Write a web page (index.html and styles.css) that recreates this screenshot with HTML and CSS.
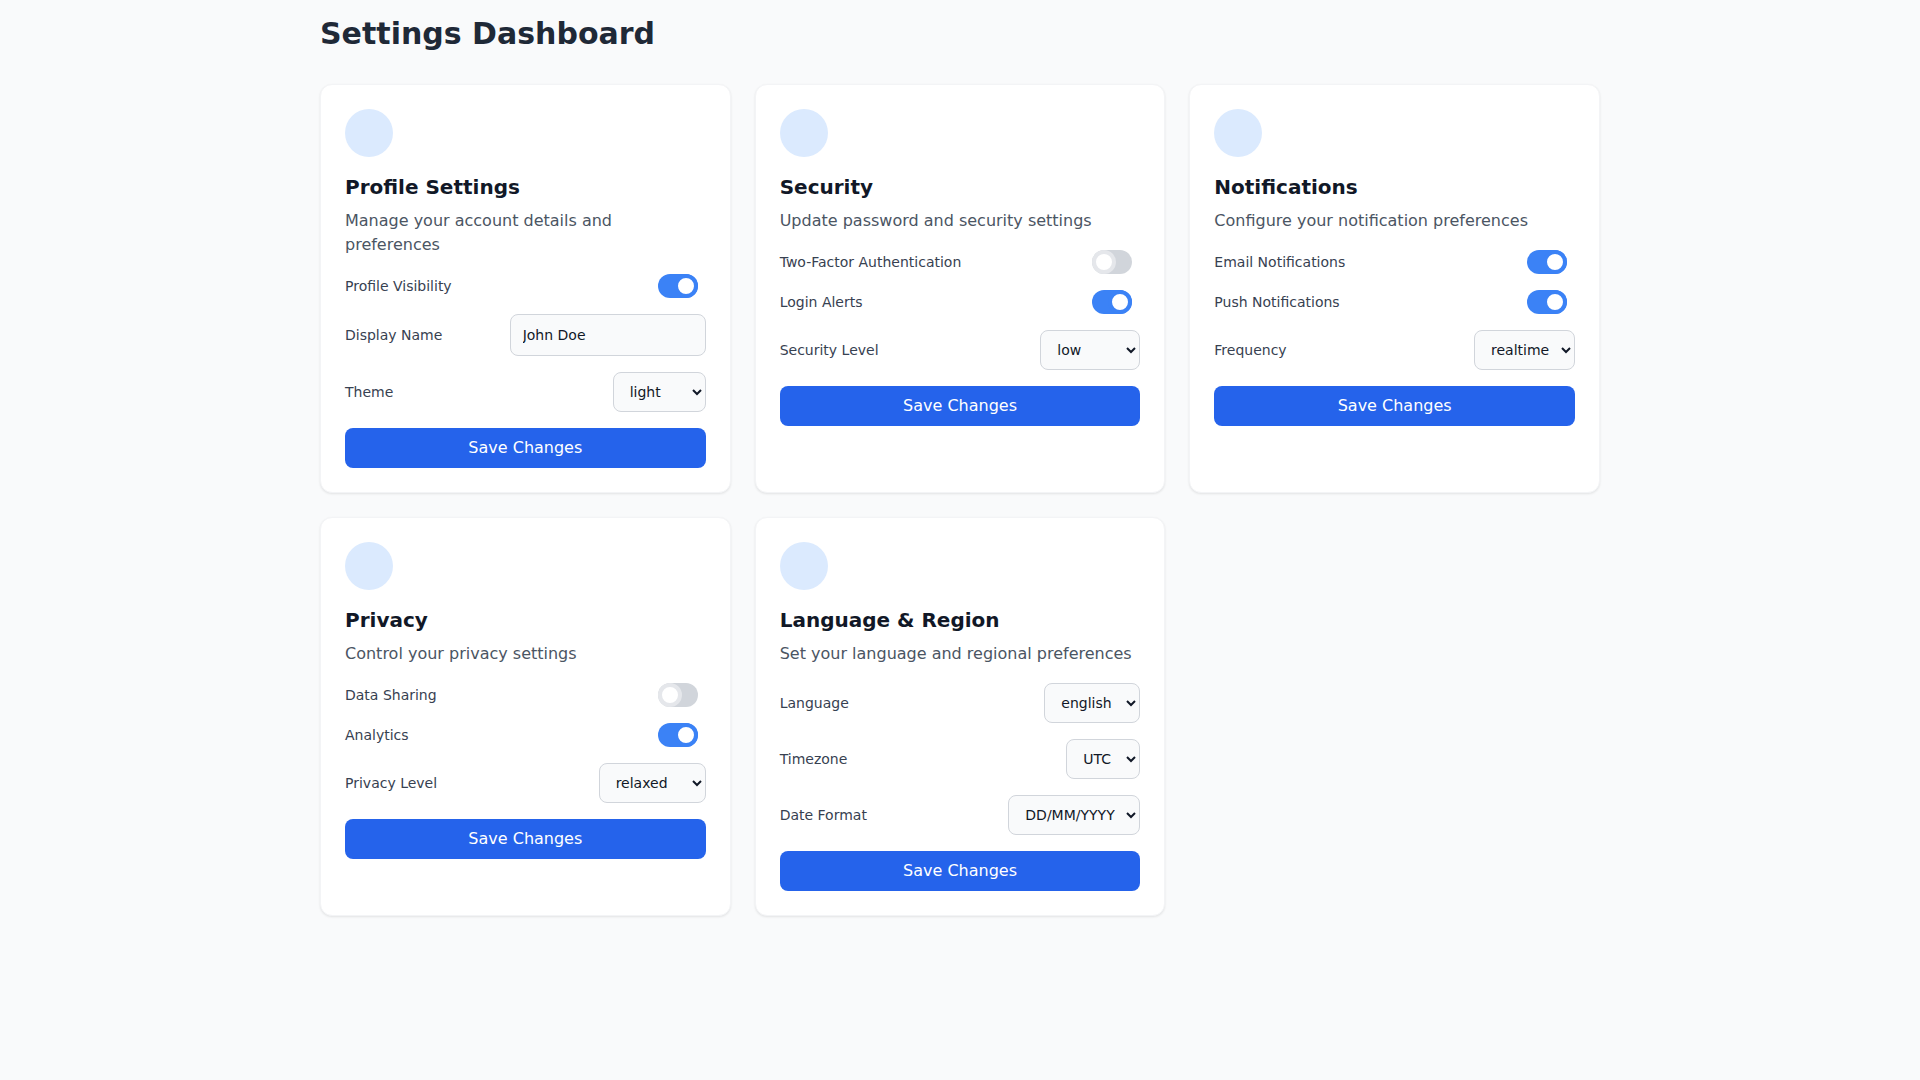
FILE: index.html
```html
<!DOCTYPE html>
<html lang="en">
<head>
<meta charset="utf-8">
<title>Settings Dashboard</title>
<link rel="stylesheet" href="styles.css">
</head>
<body>
<div class="page">
  <div class="container">
    <h1 class="page-title">Settings Dashboard</h1>
    <div class="grid">
      <div class="card">
        <div class="card-icon"></div>
        <h2 class="card-title">Profile Settings</h2>
        <p class="card-desc">Manage your account details and preferences</p>
        <div class="fields">
          <div class="row">
            <span class="label">Profile Visibility</span>
            <div class="toggle"><input type="checkbox" class="toggle-input" checked><span class="toggle-track"></span></div>
          </div>
          <div class="row">
            <span class="label">Display Name</span>
            <input type="text" class="text-input" value="John Doe">
          </div>
          <div class="row">
            <span class="label">Theme</span>
            <select class="select"><option>light</option><option>dark</option><option>system</option></select>
          </div>
          <button class="btn">Save Changes</button>
        </div>
      </div>

      <div class="card">
        <div class="card-icon"></div>
        <h2 class="card-title">Security</h2>
        <p class="card-desc">Update password and security settings</p>
        <div class="fields">
          <div class="row">
            <span class="label">Two-Factor Authentication</span>
            <div class="toggle"><input type="checkbox" class="toggle-input"><span class="toggle-track"></span></div>
          </div>
          <div class="row">
            <span class="label">Login Alerts</span>
            <div class="toggle"><input type="checkbox" class="toggle-input" checked><span class="toggle-track"></span></div>
          </div>
          <div class="row">
            <span class="label">Security Level</span>
            <select class="select"><option>low</option><option>medium</option><option>high</option></select>
          </div>
          <button class="btn">Save Changes</button>
        </div>
      </div>

      <div class="card">
        <div class="card-icon"></div>
        <h2 class="card-title">Notifications</h2>
        <p class="card-desc">Configure your notification preferences</p>
        <div class="fields">
          <div class="row">
            <span class="label">Email Notifications</span>
            <div class="toggle"><input type="checkbox" class="toggle-input" checked><span class="toggle-track"></span></div>
          </div>
          <div class="row">
            <span class="label">Push Notifications</span>
            <div class="toggle"><input type="checkbox" class="toggle-input" checked><span class="toggle-track"></span></div>
          </div>
          <div class="row">
            <span class="label">Frequency</span>
            <select class="select"><option>realtime</option><option>daily</option><option>weekly</option></select>
          </div>
          <button class="btn">Save Changes</button>
        </div>
      </div>

      <div class="card">
        <div class="card-icon"></div>
        <h2 class="card-title">Privacy</h2>
        <p class="card-desc">Control your privacy settings</p>
        <div class="fields">
          <div class="row">
            <span class="label">Data Sharing</span>
            <div class="toggle"><input type="checkbox" class="toggle-input"><span class="toggle-track"></span></div>
          </div>
          <div class="row">
            <span class="label">Analytics</span>
            <div class="toggle"><input type="checkbox" class="toggle-input" checked><span class="toggle-track"></span></div>
          </div>
          <div class="row">
            <span class="label">Privacy Level</span>
            <select class="select"><option>relaxed</option><option>balanced</option><option>strict</option></select>
          </div>
          <button class="btn">Save Changes</button>
        </div>
      </div>

      <div class="card">
        <div class="card-icon"></div>
        <h2 class="card-title">Language &amp; Region</h2>
        <p class="card-desc">Set your language and regional preferences</p>
        <div class="fields">
          <div class="row">
            <span class="label">Language</span>
            <select class="select"><option>english</option><option>spanish</option><option>french</option></select>
          </div>
          <div class="row">
            <span class="label">Timezone</span>
            <select class="select"><option>UTC</option><option>GMT</option><option>EST</option></select>
          </div>
          <div class="row">
            <span class="label">Date Format</span>
            <select class="select"><option>DD/MM/YYYY</option><option>MM/DD/YYYY</option></select>
          </div>
          <button class="btn">Save Changes</button>
        </div>
      </div>
    </div>
  </div>
</div>
</body>
</html>
```

FILE: styles.css
```css
* {
  box-sizing: border-box;
}

html, body {
  margin: 0;
  padding: 0;
}

body {
  background: #f9fafb;
  font-family: "DejaVu Sans", "Noto Sans", sans-serif;
  color: #111827;
  min-height: 1080px;
}

.page {
  padding: 16px;
}

.container {
  max-width: 1280px;
  margin: 0 auto;
}

.page-title {
  margin: 0 0 32px 0;
  font-size: 30px;
  line-height: 36px;
  font-weight: 700;
  color: #1f2937;
}

.grid {
  display: grid;
  grid-template-columns: repeat(3, 1fr);
  gap: 24px;
}

.card {
  background: #ffffff;
  border: 1px solid #f3f4f6;
  border-radius: 12px;
  box-shadow: 0 1px 3px rgba(0, 0, 0, 0.06), 0 1px 2px rgba(0, 0, 0, 0.04);
  padding: 24px;
}

.card-icon {
  width: 48px;
  height: 48px;
  border-radius: 50%;
  background: #dbeafe;
  margin-bottom: 16px;
}

.card-title {
  margin: 0 0 8px 0;
  font-size: 20px;
  line-height: 28px;
  font-weight: 700;
  color: #111827;
}

.card-desc {
  margin: 0 0 17px 0;
  font-size: 16px;
  line-height: 24px;
  color: #4b5563;
}

.fields {
  display: flex;
  flex-direction: column;
  gap: 16px;
}

.row {
  display: flex;
  align-items: center;
  justify-content: space-between;
}

.label {
  font-size: 14px;
  line-height: 20px;
  color: #374151;
}

.toggle {
  position: relative;
  width: 40px;
  height: 24px;
  margin-right: 8px;
}

.toggle-track {
  display: block;
  height: 24px;
  border-radius: 9999px;
  background: #d1d5db;
}

.toggle-input {
  position: absolute;
  top: 0;
  left: 0;
  width: 24px;
  height: 24px;
  margin: 0;
  border-radius: 50%;
  background: #ffffff;
  border: 4px solid #e5e7eb;
  appearance: none;
  -webkit-appearance: none;
  z-index: 1;
  outline: none;
}

.toggle-input:checked {
  left: 16px;
  border-color: #3b82f6;
}

.toggle-input:checked + .toggle-track {
  background: #3b82f6;
}

.text-input {
  width: 196px;
  height: 42px;
  padding: 10px 12px;
  font-family: inherit;
  font-size: 14px;
  line-height: 20px;
  color: #111827;
  background: #f9fafb;
  border: 1px solid #d1d5db;
  border-radius: 8px;
  outline: none;
}

.select {
  height: 40px;
  padding: 0 8px 0 12px;
  font-family: inherit;
  font-size: 14px;
  color: #111827;
  background-color: #f9fafb;
  border: 1px solid #d1d5db;
  border-radius: 8px;
}

.btn {
  width: 100%;
  height: 40px;
  padding: 8px 16px;
  font-family: inherit;
  font-size: 16px;
  line-height: 24px;
  color: #ffffff;
  background: #2563eb;
  border: none;
  border-radius: 8px;
  cursor: pointer;
}
```
